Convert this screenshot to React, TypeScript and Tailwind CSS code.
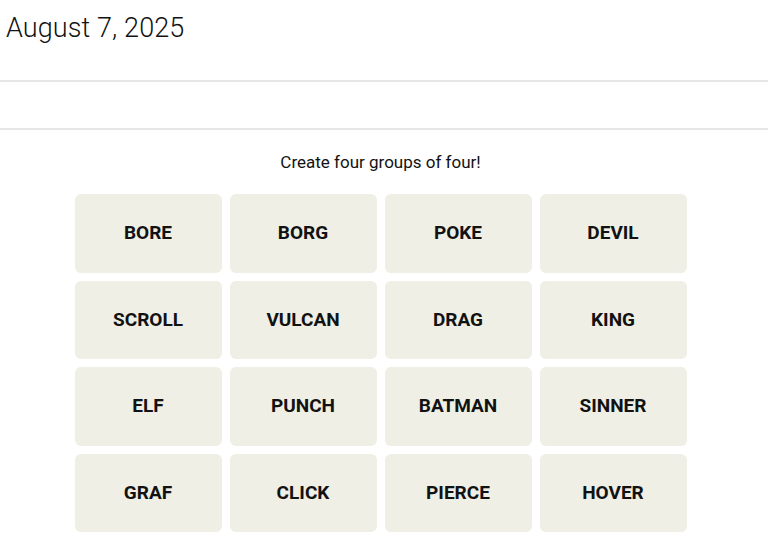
import React from "react";

const words = [
  "BORE", "BORG", "POKE", "DEVIL",
  "SCROLL", "VULCAN", "DRAG", "KING",
  "ELF", "PUNCH", "BATMAN", "SINNER",
  "GRAF", "CLICK", "PIERCE", "HOVER",
];

export default function App() {
  return (
    <div className="min-h-[547px] bg-white text-[#121212]" style={{ fontFamily: "Roboto, 'Liberation Sans', sans-serif" }}>
      <header className="h-[82px] border-b-2 border-[#e6e6e6] px-[6px] pt-[10px]">
        <h1 className="text-[27px] font-light leading-[36px] tracking-[0.1px]">August 7, 2025</h1>
      </header>
      <div className="h-[48px] border-b-2 border-[#e6e6e6]" />
      <main className="flex flex-col items-center pr-[7px]">
        <p className="mt-[21px] text-[17px] leading-[22px]">Create four groups of four!</p>
        <div className="mt-[21px] grid grid-cols-[repeat(4,147px)] auto-rows-[78.5px] gap-x-[8px] gap-y-[8px]">
          {words.map((w) => (
            <button
              key={w}
              className="flex items-center justify-center rounded-[6px] bg-[#efefe6] text-[19px] font-bold text-[#121212]"
            >
              {w}
            </button>
          ))}
        </div>
      </main>
    </div>
  );
}
